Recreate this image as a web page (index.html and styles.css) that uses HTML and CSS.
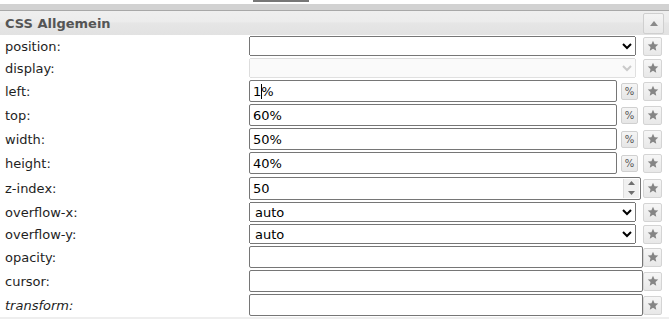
FILE: index.html
```html
<!DOCTYPE html>
<html lang="de">
<head>
<meta charset="utf-8">
<title>CSS Allgemein</title>
<link rel="stylesheet" href="styles.css">
</head>
<body>
<div class="topline"><span class="tab"></span></div>
<div class="bar"></div>
<div class="panel">
  <div class="head">
    <span class="title">CSS Allgemein</span>
    <button class="toggle" type="button"><svg width="8" height="5" viewBox="0 0 8 5"><polygon points="4,0 8,5 0,5" fill="#8a8a8a"/></svg></button>
  </div>

  <div class="row r-sel">
    <label class="lbl">position:</label>
    <div class="ctl"><select class="sel"><option></option></select></div>
    <button class="star" type="button"><svg width="12" height="12" viewBox="0 0 24 24"><polygon points="12,1.5 15.1,8.3 22.5,9.1 17,14.1 18.5,21.5 12,17.7 5.5,21.5 7,14.1 1.5,9.1 8.9,8.3" fill="#858585"/></svg></button>
  </div>

  <div class="row r-sel">
    <label class="lbl">display:</label>
    <div class="ctl"><select class="sel" disabled><option></option></select></div>
    <button class="star" type="button"><svg width="12" height="12" viewBox="0 0 24 24"><polygon points="12,1.5 15.1,8.3 22.5,9.1 17,14.1 18.5,21.5 12,17.7 5.5,21.5 7,14.1 1.5,9.1 8.9,8.3" fill="#858585"/></svg></button>
  </div>

  <div class="row r-inp">
    <label class="lbl">left:</label>
    <div class="ctl pct-ctl">
      <div class="caret-wrap"><input class="inp" type="text" value="1%"><span class="caret"></span></div>
      <button class="pct" type="button">%</button>
    </div>
    <button class="star" type="button"><svg width="12" height="12" viewBox="0 0 24 24"><polygon points="12,1.5 15.1,8.3 22.5,9.1 17,14.1 18.5,21.5 12,17.7 5.5,21.5 7,14.1 1.5,9.1 8.9,8.3" fill="#858585"/></svg></button>
  </div>

  <div class="row r-inp">
    <label class="lbl">top:</label>
    <div class="ctl pct-ctl">
      <input class="inp" type="text" value="60%">
      <button class="pct" type="button">%</button>
    </div>
    <button class="star" type="button"><svg width="12" height="12" viewBox="0 0 24 24"><polygon points="12,1.5 15.1,8.3 22.5,9.1 17,14.1 18.5,21.5 12,17.7 5.5,21.5 7,14.1 1.5,9.1 8.9,8.3" fill="#858585"/></svg></button>
  </div>

  <div class="row r-inp">
    <label class="lbl">width:</label>
    <div class="ctl pct-ctl">
      <input class="inp" type="text" value="50%">
      <button class="pct" type="button">%</button>
    </div>
    <button class="star" type="button"><svg width="12" height="12" viewBox="0 0 24 24"><polygon points="12,1.5 15.1,8.3 22.5,9.1 17,14.1 18.5,21.5 12,17.7 5.5,21.5 7,14.1 1.5,9.1 8.9,8.3" fill="#858585"/></svg></button>
  </div>

  <div class="row r-inp">
    <label class="lbl">height:</label>
    <div class="ctl pct-ctl">
      <input class="inp" type="text" value="40%">
      <button class="pct" type="button">%</button>
    </div>
    <button class="star" type="button"><svg width="12" height="12" viewBox="0 0 24 24"><polygon points="12,1.5 15.1,8.3 22.5,9.1 17,14.1 18.5,21.5 12,17.7 5.5,21.5 7,14.1 1.5,9.1 8.9,8.3" fill="#858585"/></svg></button>
  </div>

  <div class="row r-num">
    <label class="lbl">z-index:</label>
    <div class="ctl num-ctl">
      <div class="numbox">
        <span class="numval">50</span>
        <span class="spin">
          <svg width="7" height="4" viewBox="0 0 7 4"><polygon points="3.5,0 7,4 0,4" fill="#6f6f6f"/></svg>
          <svg width="7" height="4" viewBox="0 0 7 4"><polygon points="0,0 7,0 3.5,4" fill="#6f6f6f"/></svg>
        </span>
      </div>
    </div>
    <button class="star" type="button"><svg width="12" height="12" viewBox="0 0 24 24"><polygon points="12,1.5 15.1,8.3 22.5,9.1 17,14.1 18.5,21.5 12,17.7 5.5,21.5 7,14.1 1.5,9.1 8.9,8.3" fill="#858585"/></svg></button>
  </div>

  <div class="row r-sel">
    <label class="lbl">overflow-x:</label>
    <div class="ctl"><select class="sel"><option>auto</option></select></div>
    <button class="star" type="button"><svg width="12" height="12" viewBox="0 0 24 24"><polygon points="12,1.5 15.1,8.3 22.5,9.1 17,14.1 18.5,21.5 12,17.7 5.5,21.5 7,14.1 1.5,9.1 8.9,8.3" fill="#858585"/></svg></button>
  </div>

  <div class="row r-sel">
    <label class="lbl">overflow-y:</label>
    <div class="ctl"><select class="sel"><option>auto</option></select></div>
    <button class="star" type="button"><svg width="12" height="12" viewBox="0 0 24 24"><polygon points="12,1.5 15.1,8.3 22.5,9.1 17,14.1 18.5,21.5 12,17.7 5.5,21.5 7,14.1 1.5,9.1 8.9,8.3" fill="#858585"/></svg></button>
  </div>

  <div class="row r-inp">
    <label class="lbl">opacity:</label>
    <div class="ctl wide"><input class="inp" type="text" value=""></div>
    <button class="star" type="button"><svg width="12" height="12" viewBox="0 0 24 24"><polygon points="12,1.5 15.1,8.3 22.5,9.1 17,14.1 18.5,21.5 12,17.7 5.5,21.5 7,14.1 1.5,9.1 8.9,8.3" fill="#858585"/></svg></button>
  </div>

  <div class="row r-inp">
    <label class="lbl">cursor:</label>
    <div class="ctl wide"><input class="inp" type="text" value=""></div>
    <button class="star" type="button"><svg width="12" height="12" viewBox="0 0 24 24"><polygon points="12,1.5 15.1,8.3 22.5,9.1 17,14.1 18.5,21.5 12,17.7 5.5,21.5 7,14.1 1.5,9.1 8.9,8.3" fill="#858585"/></svg></button>
  </div>

  <div class="row r-inp">
    <label class="lbl italic">transform:</label>
    <div class="ctl wide"><input class="inp" type="text" value=""></div>
    <button class="star" type="button"><svg width="12" height="12" viewBox="0 0 24 24"><polygon points="12,1.5 15.1,8.3 22.5,9.1 17,14.1 18.5,21.5 12,17.7 5.5,21.5 7,14.1 1.5,9.1 8.9,8.3" fill="#858585"/></svg></button>
  </div>

  <div class="foot"></div>
</div>
</body>
</html>
```
FILE: styles.css
```css
html, body {
  margin: 0;
  padding: 0;
  background: #fff;
}
body {
  width: 669px;
  height: 319px;
  overflow: hidden;
  font-family: "DejaVu Sans", Verdana, sans-serif;
  font-size: 13px;
  color: #222;
}
.topline {
  height: 4px;
  display: flex;
}
.tab {
  margin-left: 253px;
  width: 56px;
  height: 2px;
  background: #777;
}
.bar {
  height: 6px;
  background: #d2d2d2;
  border-bottom: 1px solid #a8a8a8;
}
.head {
  height: 24px;
  display: flex;
  align-items: center;
  justify-content: space-between;
  padding: 0 5px 0 5px;
  background: linear-gradient(to bottom, #efefef 0%, #ececec 45%, #e6e6e6 50%, #e2e2e2 100%);
}
.title {
  font-weight: bold;
  color: #555;
  font-size: 13px;
}
.toggle {
  width: 21px;
  height: 21px;
  margin: 1px 0 0 0;
  padding: 0;
  border: 1px solid #cfcfcf;
  border-radius: 2px;
  background: linear-gradient(#f4f4f4, #e8e8e8);
  display: flex;
  align-items: center;
  justify-content: center;
}
.row {
  display: flex;
  align-items: center;
  padding-right: 7px;
}
.r-sel { height: 22px; }
.r-inp { height: 24px; }
.r-num { height: 26px; }
.lbl {
  width: 249px;
  flex: none;
  box-sizing: border-box;
  padding-left: 5px;
  color: #1e1e1e;
}
.italic { font-style: italic; }
.ctl {
  flex: 1;
  display: flex;
  align-items: center;
  min-width: 0;
}
.sel {
  flex: 1;
  min-width: 0;
  height: 20px;
  margin-right: 7px;
  font-family: "DejaVu Sans", Verdana, sans-serif;
  font-size: 13px;
  color: #000;
  padding: 0 0 0 1px;
}
.sel:disabled {
  color: #b5b5b5;
}
.inp {
  flex: 1;
  min-width: 0;
  width: 100%;
  height: 22px;
  box-sizing: border-box;
  border: 1px solid #767676;
  border-radius: 2px;
  padding: 1px 3px;
  font-family: "DejaVu Sans", Verdana, sans-serif;
  font-size: 13px;
  color: #000;
  background: #fff;
  outline: none;
}
.caret-wrap {
  flex: 1;
  display: flex;
  position: relative;
}
.caret {
  position: absolute;
  left: 12px;
  top: 4px;
  width: 1px;
  height: 15px;
  background: #000;
}
.pct-ctl .inp { flex: 1; }
.pct {
  flex: none;
  width: 17px;
  height: 17px;
  margin: 0 5px 0 4px;
  padding: 0;
  border: 1px solid #d0d0d0;
  border-radius: 2px;
  background: linear-gradient(#f5f5f5, #e6e6e6);
  color: #555;
  font-family: "DejaVu Sans", Verdana, sans-serif;
  font-size: 10px;
  line-height: 15px;
  text-align: center;
}
.num-ctl { margin-right: 2px; }
.numbox {
  flex: 1;
  height: 23px;
  box-sizing: border-box;
  border: 1px solid #767676;
  border-radius: 2px;
  display: flex;
  align-items: center;
  justify-content: space-between;
  padding: 0 1px 0 3px;
}
.numval {
  color: #000;
}
.spin {
  width: 15px;
  height: 19px;
  display: flex;
  flex-direction: column;
  align-items: center;
  justify-content: space-around;
  background: #f0f0f0;
  border-left: 1px solid #dcdcdc;
}
.star {
  flex: none;
  width: 19px;
  height: 19px;
  padding: 0;
  border: 1px solid #d4d4d4;
  border-radius: 2px;
  background: linear-gradient(#f6f6f6, #e8e8e8);
  display: flex;
  align-items: center;
  justify-content: center;
}
.foot {
  height: 4px;
  background: #eee;
}
```
